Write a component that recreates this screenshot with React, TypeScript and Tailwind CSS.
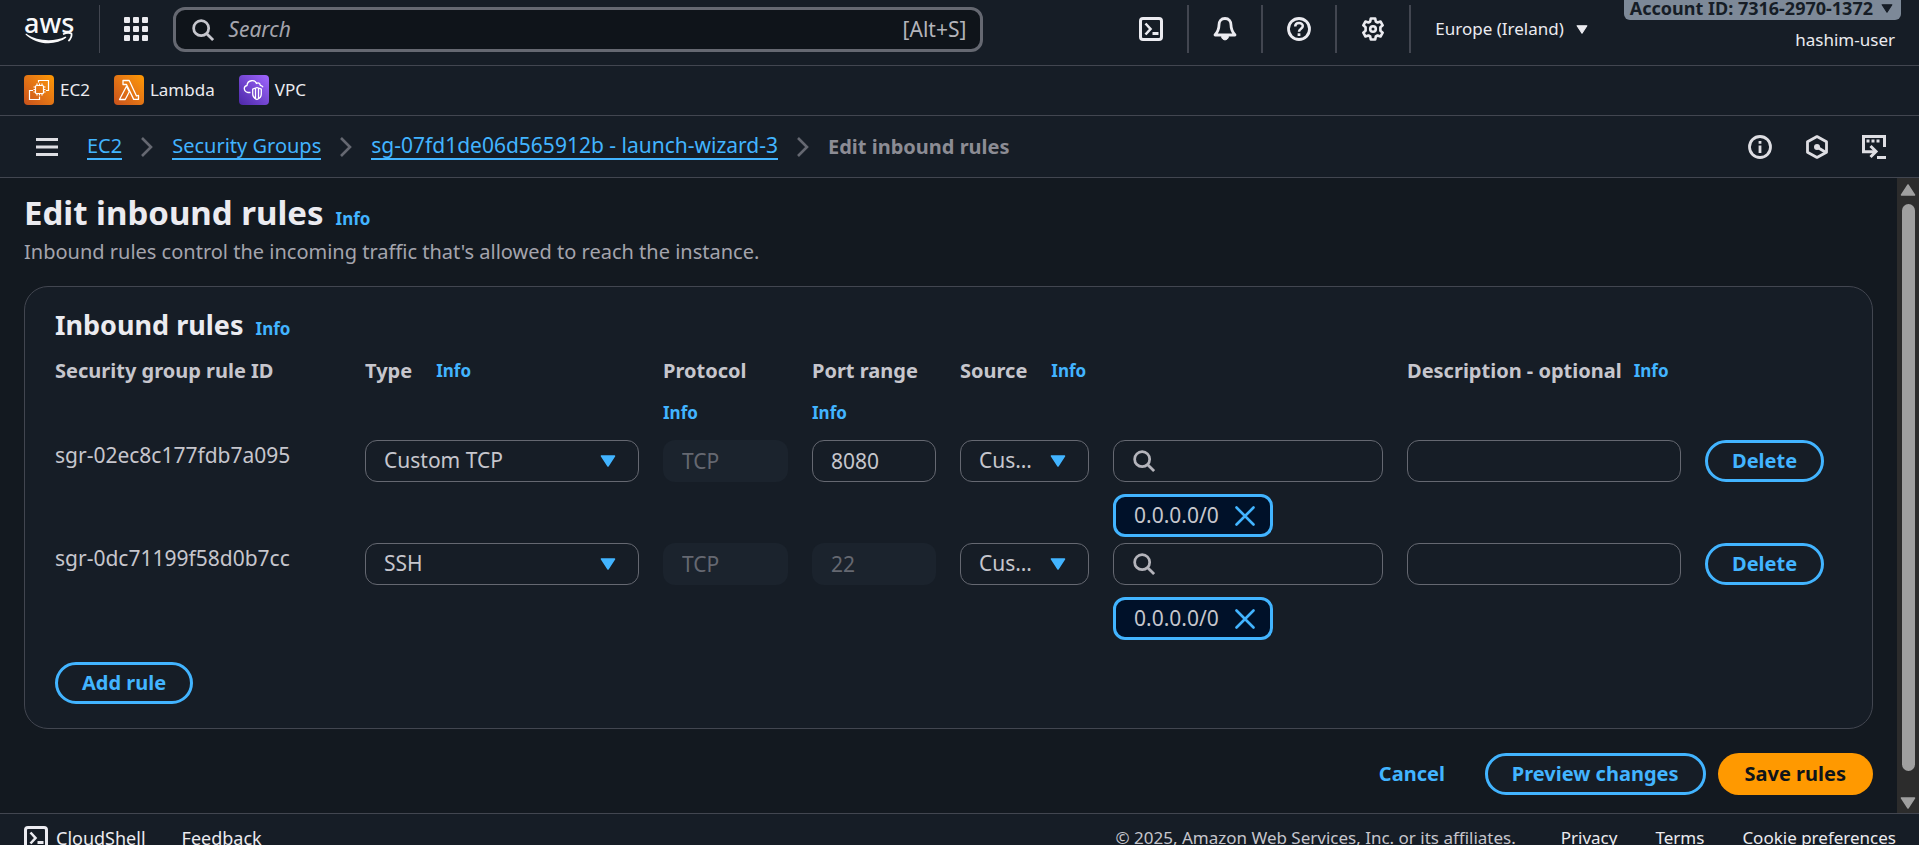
import React, { type ReactNode } from "react";

type Rule = { id: string; type: string; protocol: string; port: string; portLocked: boolean; cidr: string };

const rules: Rule[] = [
  { id: "sgr-02ec8c177fdb7a095", type: "Custom TCP", protocol: "TCP", port: "8080", portLocked: false, cidr: "0.0.0.0/0" },
  { id: "sgr-0dc71199f58d0b7cc", type: "SSH", protocol: "TCP", port: "22", portLocked: true, cidr: "0.0.0.0/0" },
];

const rowGrid =
  "grid grid-cols-[minmax(0,286fr)_minmax(0,274fr)_minmax(0,125fr)_minmax(0,124fr)_minmax(0,129fr)_minmax(0,270fr)_minmax(0,274fr)_minmax(0,137fr)] gap-x-6";

const field = "h-[42px] w-full rounded-xl border border-[#656871] bg-transparent px-[18px] text-[#c6c6cd] outline-none";
const lockedField = "h-[42px] w-full rounded-xl bg-[#1b232d] px-[19px] text-[#656871] outline-none";
const pill = "h-[42px] rounded-full border-[3px] border-[#42b4ff] text-xl font-bold text-[#42b4ff]";

function Info() {
  return (
    <a href="#info" className="text-[17px] leading-[30px] font-bold text-[#42b4ff]">
      Info
    </a>
  );
}

function Caret({ className }: { className: string }) {
  return (
    <svg viewBox="0 0 16 12" aria-hidden="true" className={className}>
      <path d="M1.5 1h13L8 11z" fill="currentColor" stroke="currentColor" strokeWidth="1.5" strokeLinejoin="round" />
    </svg>
  );
}

function SearchIcon({ className }: { className: string }) {
  return (
    <svg viewBox="0 0 24 24" fill="none" stroke="currentColor" strokeWidth="3" aria-hidden="true" className={className}>
      <circle cx="10" cy="10" r="8.2" />
      <path d="M15.8 15.8 23 23" />
    </svg>
  );
}

function CloudShellIcon({ className }: { className: string }) {
  return (
    <svg viewBox="0 0 24 24" fill="none" stroke="currentColor" strokeWidth="3" aria-hidden="true" className={className}>
      <rect x="1.5" y="1.5" width="21" height="21" rx="2.5" strokeLinejoin="round" />
      <path d="M6.5 6.5 11.5 12l-5 5.500" strokeWidth="2.600" />
      <path d="M13.500 16.500H19.500" />
    </svg>
  );
}

function AwsLogo() {
  return (
    <span className="flex flex-col items-center text-[#f9f9fa]">
      <span className="text-[27px] leading-[18px] font-medium">aws</span>
      <svg viewBox="0 0 48 12" aria-hidden="true" className="h-3 w-12">
        <path d="M1 1.600c7 5 14.500 6.600 22.500 6.600 6 0 12-1.200 17-3.700l.9 1.100C37 9.200 30 11.200 23.500 11.200 14.500 11.200 6.500 8 .5 2.400z" fill="currentColor" />
        <path d="M38 2.200c3-1.400 7-1.400 8.400-.7.600 2-.6 5.500-3 7.500" fill="none" stroke="currentColor" strokeWidth="1.800" />
      </svg>
    </span>
  );
}

function Ec2Icon() {
  return (
    <svg viewBox="0 0 30 30" fill="none" stroke="#fff" strokeWidth="1.200" aria-hidden="true" className="size-[30px] rounded-sm bg-linear-to-tr from-[#c8511b] to-[#ff9900]">
      <rect x="11.500" y="10.500" width="8" height="8" rx="1" />
      <path d="M13 8.500v2M15.500 8.500v2M18 8.500v2M13 18.500v2M15.500 18.500v2M18 18.500v2M9.500 12h2M9.500 14.500h2M9.500 17h2M19.500 12h2M19.500 14.500h2M19.500 17h2" />
      <path d="M14.500 7.500v-2h10v10h-2.500M9 15.500H5.500v9h10v-3" />
    </svg>
  );
}

function LambdaIcon() {
  return (
    <svg viewBox="0 0 30 30" fill="none" stroke="#fff" strokeWidth="1.300" strokeLinejoin="round" aria-hidden="true" className="size-[30px] rounded-sm bg-linear-to-tr from-[#c8511b] to-[#ff9900]">
      <path d="M11.200 24.500H5.500l7-13.200 2.800 5.500z" />
      <path d="M9 5.500h6.200l7.300 15.500 2-.6v4h-4.800L12.500 9.500H9z" />
    </svg>
  );
}

function VpcIcon() {
  return (
    <svg viewBox="0 0 30 30" fill="none" stroke="#fff" strokeWidth="1.300" strokeLinejoin="round" aria-hidden="true" className="size-[30px] rounded-sm bg-linear-to-tr from-[#4d27a8] to-[#a166ff]">
      <path d="M11.500 17.500H9c-5-1-4.500-6.500-1-7C8.500 4.500 16 4.500 17.500 8.500c1.500-1.400 3.600-.4 3.800 1.800 1.200.2 2.200.9 2.700 2" />
      <path d="M18 12.500 22.300 14.200V19c0 2.500-1.800 4.500-4.300 5.500-2.500-1-4.300-3-4.300-5.500v-4.800zM16.500 13.500v10M19.500 13.500v10" />
    </svg>
  );
}

function Service({ icon, name }: { icon: ReactNode; name: string }) {
  return (
    <a href={`#${name}`} className="flex items-center gap-1.5 text-[17px]">
      {icon}
      {name}
    </a>
  );
}

function Divider() {
  return <span className="h-12 w-0.5 bg-[#424650]" />;
}

function Chevron() {
  return (
    <svg viewBox="0 0 12 20" fill="none" stroke="#656871" strokeWidth="2.600" aria-hidden="true" className="h-5 w-3">
      <path d="M1 1l9 9-9 9" />
    </svg>
  );
}

function TopNav() {
  return (
    <header className="flex h-[66px] shrink-0 items-start border-b border-[#424650] pl-6 text-[17px]">
      <a href="#home" aria-label="AWS home" className="mt-3.5">
        <AwsLogo />
      </a>
      <span className="mt-[5px] ml-[25px] h-12 w-px bg-[#424650]" />
      <button type="button" aria-label="Services" className="mt-[17px] ml-6">
        <svg viewBox="0 0 24 24" fill="#ebebf0" aria-hidden="true" className="size-6">
          {[0, 9, 18].map((y) => [0, 9, 18].map((x) => <rect key={`${x}-${y}`} x={x} y={y} width="6" height="6" rx="1" />))}
        </svg>
      </button>
      <label className="mt-[7px] ml-[25px] flex h-[45px] w-[810px] items-center gap-3.5 rounded-xl border-[3px] border-[#656871] bg-[#0f141a] pr-3.5 pl-4 text-[21px] text-[#b4b4bb]">
        <SearchIcon className="size-[22px] text-[#c6c6cd]" />
        <input type="search" aria-label="Search" placeholder="Search" className="min-w-0 flex-1 bg-transparent outline-none placeholder:text-[#a4a4ad] placeholder:italic" />
        <span>[Alt+S]</span>
      </label>
      <div className="mt-[5px] ml-auto flex items-center gap-6 text-[#ebebf0]">
        <button type="button" aria-label="CloudShell">
          <CloudShellIcon className="size-6" />
        </button>
        <Divider />
        <button type="button" aria-label="Notifications">
          <svg viewBox="0 0 24 24" fill="none" stroke="currentColor" strokeWidth="2.800" strokeLinejoin="round" aria-hidden="true" className="size-6">
            <path d="M12 1.500c-4 0-6 3-6 6.500 0 5-1.500 7-4 10h20c-2.500-3-4-5-4-10 0-3.500-2-6.500-6-6.500z" />
            <path d="M8.500 19.500c.5 4.500 6.500 4.500 7 0z" fill="currentColor" strokeWidth="1" />
          </svg>
        </button>
        <Divider />
        <button type="button" aria-label="Help">
          <svg viewBox="0 0 24 24" fill="none" stroke="currentColor" strokeWidth="2.800" aria-hidden="true" className="size-6">
            <circle cx="12" cy="12" r="10.500" />
            <path d="M8.200 9.500c0-4.500 7.600-4.500 7.600-.4 0 2.700-3.800 2.600-3.800 5.600" strokeWidth="2.500" />
            <path d="M12 16.300v2.700" />
          </svg>
        </button>
        <Divider />
        <button type="button" aria-label="Settings">
          <svg viewBox="0 0 24 24" fill="none" stroke="currentColor" strokeWidth="2.600" strokeLinejoin="round" aria-hidden="true" className="size-6">
            <path d="M9.800 1.500h4.400l.6 3 1.800 1 2.900-1 2.200 3.800-2.300 2v3.400l2.300 2-2.200 3.800-2.900-1-1.800 1-.6 3H9.800l-.6-3-1.800-1-2.900 1-2.200-3.800 2.300-2v-3.400l-2.300-2 2.200-3.800 2.900 1 1.800-1z" />
            <circle cx="12" cy="12" r="2.800" />
          </svg>
        </button>
        <Divider />
        <button type="button" className="flex items-center gap-3">
          Europe (Ireland)
          <Caret className="h-[11px] w-3" />
        </button>
      </div>
      <div className="mr-[18px] ml-9 flex flex-col items-end">
        <button type="button" className="flex h-5 items-center gap-2 rounded-b-md bg-[#7d8998] pr-2 pb-1 pl-1.5 text-lg font-bold text-[#161d26]">
          <span className="leading-4">Account ID: 7316-2970-1372</span>
          <Caret className="h-[11px] w-3" />
        </button>
        <span className="mt-2 mr-1.5 leading-6">hashim-user</span>
      </div>
    </header>
  );
}

function Breadcrumbs() {
  const crumb = "border-b-2 border-[#42b4ff] leading-[25px] text-[#42b4ff]";
  return (
    <div className="flex h-[62px] shrink-0 items-center border-b border-[#424650] pr-[33px] pl-9 text-xl">
      <button type="button" aria-label="Open navigation" className="text-[#dedee3]">
        <svg viewBox="0 0 22 18" fill="currentColor" aria-hidden="true" className="h-[18px] w-[22px]">
          <path d="M0 0h22v3H0zM0 7.500h22v3H0zM0 15h22v3H0z" />
        </svg>
      </button>
      <nav aria-label="Breadcrumbs" className="ml-[29px] flex items-center gap-[19px]">
        <a href="#ec2" className={crumb}>EC2</a>
        <Chevron />
        <a href="#groups" className={crumb}>Security Groups</a>
        <Chevron />
        <a href="#sg" className={`${crumb} text-[21px]`}>sg-07fd1de06d565912b - launch-wizard-3</a>
        <Chevron />
        <span className="font-bold text-[#8c8c94]">Edit inbound rules</span>
      </nav>
      <div className="ml-auto flex items-center gap-[33px] text-[#dedee3]">
        <button type="button" aria-label="Information">
          <svg viewBox="0 0 24 24" fill="none" stroke="currentColor" strokeWidth="2.800" aria-hidden="true" className="size-6">
            <circle cx="12" cy="12" r="10.500" />
            <path d="M12 10.500v7.500M12 6v2.800" />
          </svg>
        </button>
        <button type="button" aria-label="Amazon Q">
          <svg viewBox="0 0 24 24" fill="none" stroke="currentColor" strokeWidth="2.800" strokeLinejoin="round" aria-hidden="true" className="size-6">
            <path d="M12 1.600 21.500 6.800v10.400L12 22.400 2.500 17.200V6.800z" />
            <circle cx="12" cy="12" r="3" fill="currentColor" stroke="none" />
            <path d="M12 12l9 5.500" />
          </svg>
        </button>
        <button type="button" aria-label="Open console tools">
          <svg viewBox="0 0 24 24" fill="none" stroke="currentColor" strokeWidth="3" aria-hidden="true" className="size-6">
            <path d="M22.500 12V1.500h-21v15.200H13" />
            <path d="M8.500 11l5.500 5.500L8.500 22" />
            <path d="M15 22.500h9M4.500 6h3M9.500 6h3M14.500 6h3" />
          </svg>
        </button>
      </div>
    </div>
  );
}

function Select({ label, value, className }: { label: string; value: string; className: string }) {
  return (
    <div className="relative">
      <select aria-label={label} defaultValue={value} className={`${field} ${className} appearance-none`}>
        <option className="text-black">{value}</option>
      </select>
      <Caret className="pointer-events-none absolute top-[15px] right-[23px] h-3 w-4 text-[#42b4ff]" />
    </div>
  );
}

function RuleRow({ rule }: { rule: Rule }) {
  return (
    <tr className={`${rowGrid} h-[103px] items-start`}>
      <td className="leading-[30px]">{rule.id}</td>
      <td>
        <Select label="Type" value={rule.type} className="" />
      </td>
      <td>
        <input aria-label="Protocol" disabled defaultValue={rule.protocol} className={lockedField} />
      </td>
      <td>
        <input aria-label="Port range" disabled={rule.portLocked} defaultValue={rule.port} className={rule.portLocked ? lockedField : field} />
      </td>
      <td>
        <Select label="Source type" value="Custom" className="pr-[53px] text-ellipsis" />
      </td>
      <td className="flex flex-col items-start gap-3">
        <label className="relative block w-full">
          <SearchIcon className="absolute top-2.5 left-5 size-[22px] text-[#b4b4bb]" />
          <input type="search" aria-label="Source" className={`${field} block pl-12`} />
        </label>
        <span className="flex h-[43px] items-center gap-4 rounded-xl border-[3px] border-[#42b4ff] bg-[#001129] pr-[15px] pl-[18px]">
          {rule.cidr}
          <button type="button" aria-label={`Remove ${rule.cidr}`} className="text-[#42b4ff]">
            <svg viewBox="0 0 20 20" fill="none" stroke="currentColor" strokeWidth="2.600" strokeLinecap="round" aria-hidden="true" className="size-5">
              <path d="M1.500 1.500l17 17M18.500 1.500l-17 17" />
            </svg>
          </button>
        </span>
      </td>
      <td>
        <input type="text" aria-label="Description" className={field} />
      </td>
      <td>
        <button type="button" className={`${pill} px-6`}>Delete</button>
      </td>
    </tr>
  );
}

function Heading({ children, stacked = false, wide = false }: { children: ReactNode; stacked?: boolean; wide?: boolean }) {
  return (
    <th scope="col" className="text-left text-xl leading-[30px] font-bold whitespace-nowrap">
      <div className={stacked ? "flex flex-col gap-3" : wide ? "flex gap-6" : "flex gap-3"}>
        {children}
      </div>
    </th>
  );
}

function RulesCard() {
  return (
    <section className="mt-[19px] rounded-3xl border border-[#424650] bg-[#161d26] px-[30px] pb-6">
      <div className="flex items-baseline gap-3 pt-5">
        <h2 className="text-[27px] leading-9 font-bold text-[#ebebf0]">Inbound rules</h2>
        <Info />
      </div>
      <table className="mt-3 block">
        <thead className="block">
          <tr className={`${rowGrid} h-[84px] items-start`}>
            <Heading>Security group rule ID</Heading>
            <Heading wide>Type <Info /></Heading>
            <Heading stacked><span>Protocol</span><Info /></Heading>
            <Heading stacked><span>Port range</span><Info /></Heading>
            <Heading wide>Source <Info /></Heading>
            <td />
            <Heading>Description - optional <Info /></Heading>
            <td />
          </tr>
        </thead>
        <tbody className="block">
          {rules.map((rule) => (
            <RuleRow key={rule.id} rule={rule} />
          ))}
        </tbody>
      </table>
      <button type="button" className={`${pill} mt-4 px-6`}>Add rule</button>
    </section>
  );
}

function Scrollbar() {
  return (
    <div aria-hidden="true" className="flex w-[22px] shrink-0 flex-col items-center justify-between bg-[#2c2c2c] pt-1.5 pb-1 text-[#9f9f9f]">
      <Caret className="h-3 w-4 rotate-180" />
      <span className="mt-2 mb-[26px] w-[13px] flex-1 rounded-full bg-[#9f9f9f]" />
      <Caret className="h-3 w-4" />
    </div>
  );
}

export default function App() {
  return (
    <div className="flex h-screen flex-col overflow-hidden bg-[#161d26] font-['Noto_Sans','Open_Sans',sans-serif] text-[#ebebf0]">
      <TopNav />
      <nav aria-label="Favorites" className="flex h-[50px] shrink-0 items-center gap-6 border-b border-[#424650] pb-0.5 pl-6">
        <Service icon={<Ec2Icon />} name="EC2" />
        <Service icon={<LambdaIcon />} name="Lambda" />
        <Service icon={<VpcIcon />} name="VPC" />
      </nav>
      <Breadcrumbs />
      <div className="flex min-h-0 flex-1">
        <main className="min-w-0 flex-1 overflow-hidden bg-[#131920] pr-6 pl-6 text-[21px] text-[#c6c6cd]">
          <div className="flex items-baseline gap-3 pt-3">
            <h1 className="text-[33px] leading-[45px] font-bold text-[#ebebf0]">Edit inbound rules</h1>
            <Info />
          </div>
          <p className="mt-0.5 text-xl leading-[30px] text-[#a4a4ad]">Inbound rules control the incoming traffic that's allowed to reach the instance.</p>
          <RulesCard />
          <div className="mt-6 flex justify-end text-xl">
            <button type="button" className="mr-4 h-[42px] px-6 font-bold text-[#42b4ff]">Cancel</button>
            <button type="button" className={`${pill} mr-3 bg-[#161d26] px-6`}>Preview changes</button>
            <button type="button" className="h-[42px] rounded-full bg-[#ff9900] px-[27px] font-bold text-[#0f141a]">Save rules</button>
          </div>
        </main>
        <Scrollbar />
      </div>
      <footer className="h-8 shrink-0 overflow-hidden border-t border-[#424650] text-[17px]">
        <div className="flex h-12 items-center pr-[23px] pl-6">
          <button type="button" className="flex items-center gap-2 text-lg">
            <CloudShellIcon className="size-6" />
            CloudShell
          </button>
          <a href="#feedback" className="ml-9 text-lg">Feedback</a>
          <span className="ml-auto text-[#c6c6cd]">© 2025, Amazon Web Services, Inc. or its affiliates.</span>
          <a href="#privacy" className="ml-[45px]">Privacy</a>
          <a href="#terms" className="ml-[38px]">Terms</a>
          <a href="#cookies" className="ml-[38px]">Cookie preferences</a>
        </div>
      </footer>
    </div>
  );
}
